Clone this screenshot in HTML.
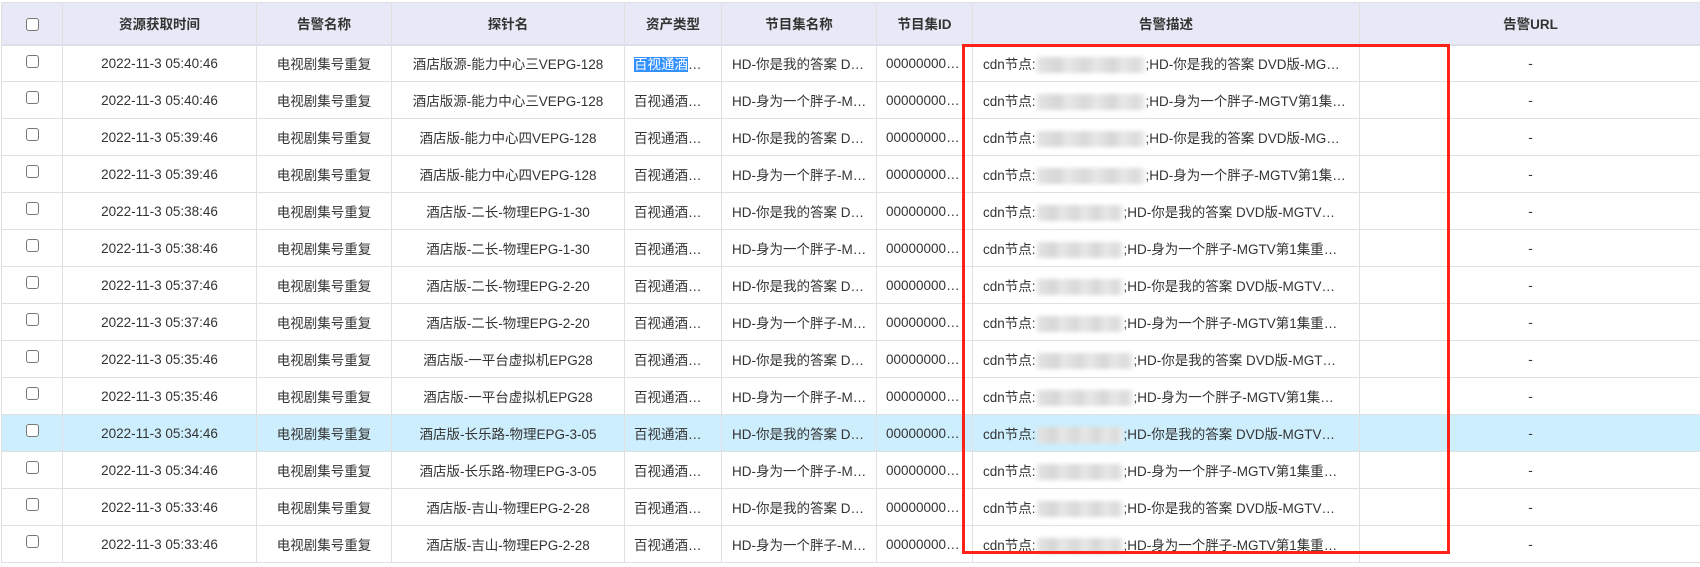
<!DOCTYPE html>
<html><head><meta charset="utf-8"><style>
*{box-sizing:border-box;margin:0;padding:0}
body{width:1700px;height:567px;background:#fff;font-family:"Liberation Sans","Noto Sans CJK SC",sans-serif;font-size:13.5px;color:#333;position:relative;overflow:hidden}
table{position:absolute;left:1px;top:2px;border-collapse:collapse;table-layout:fixed;width:1700px}
td,th{border:1px solid #e0e0e0;height:37px;white-space:nowrap;overflow:hidden;text-overflow:ellipsis;text-align:center;padding:0 6px}
th{height:42px;background:#e7eaf6;font-weight:bold;color:#333;border-bottom:2px solid #dcdfe8}
td.l{text-align:left;padding-left:9px;padding-right:4px}
td.d{text-align:left;padding-left:10px;padding-right:4px}
tr.hl td{background:#cdeefd}
.cb{display:inline-block;width:13px;height:13px;border:1px solid #777;border-radius:3px;background:#fff;vertical-align:middle;position:relative;top:-3px}
.bl{display:inline-block;width:108px;height:16px;vertical-align:middle;background:linear-gradient(90deg,#e4e4e4 0,#d6d6d6 20%,#e8e8e8 28%,#d8d8d8 45%,#e8e8e8 55%,#d6d6d6 70%,#e8e8e8 80%,#dadada 92%,#eee 100%);filter:blur(2px);margin:0 1px}
.sel{background:#3390ff;color:#fff}
#red{position:absolute;left:962px;top:44px;width:488px;height:510px;border:3px solid #ff2218}
</style></head><body>
<table>
<colgroup><col style="width:61px"><col style="width:194px"><col style="width:135px"><col style="width:233px"><col style="width:97px"><col style="width:155px"><col style="width:96px"><col style="width:387px"><col style="width:342px"></colgroup>
<tr><th><span class="cb" style="top:0"></span></th><th>资源获取时间</th><th>告警名称</th><th>探针名</th><th>资产类型</th><th>节目集名称</th><th>节目集ID</th><th>告警描述</th><th>告警URL</th></tr>
<tr><td><span class="cb"></span></td><td>2022-11-3 05:40:46</td><td>电视剧集号重复</td><td>酒店版源-能力中心三VEPG-128</td><td class="l"><span class="sel">百视通酒</span>…</td><td class="d">HD-你是我的答案 D…</td><td class="l">00000000…</td><td class="d">cdn节点:<span class="bl"></span>;HD-你是我的答案 DVD版-MG…</td><td>-</td></tr>
<tr><td><span class="cb"></span></td><td>2022-11-3 05:40:46</td><td>电视剧集号重复</td><td>酒店版源-能力中心三VEPG-128</td><td class="l">百视通酒…</td><td class="d">HD-身为一个胖子-M…</td><td class="l">00000000…</td><td class="d">cdn节点:<span class="bl"></span>;HD-身为一个胖子-MGTV第1集…</td><td>-</td></tr>
<tr><td><span class="cb"></span></td><td>2022-11-3 05:39:46</td><td>电视剧集号重复</td><td>酒店版-能力中心四VEPG-128</td><td class="l">百视通酒…</td><td class="d">HD-你是我的答案 D…</td><td class="l">00000000…</td><td class="d">cdn节点:<span class="bl"></span>;HD-你是我的答案 DVD版-MG…</td><td>-</td></tr>
<tr><td><span class="cb"></span></td><td>2022-11-3 05:39:46</td><td>电视剧集号重复</td><td>酒店版-能力中心四VEPG-128</td><td class="l">百视通酒…</td><td class="d">HD-身为一个胖子-M…</td><td class="l">00000000…</td><td class="d">cdn节点:<span class="bl"></span>;HD-身为一个胖子-MGTV第1集…</td><td>-</td></tr>
<tr><td><span class="cb"></span></td><td>2022-11-3 05:38:46</td><td>电视剧集号重复</td><td>酒店版-二长-物理EPG-1-30</td><td class="l">百视通酒…</td><td class="d">HD-你是我的答案 D…</td><td class="l">00000000…</td><td class="d">cdn节点:<span class="bl" style="width:86px"></span>;HD-你是我的答案 DVD版-MGTV…</td><td>-</td></tr>
<tr><td><span class="cb"></span></td><td>2022-11-3 05:38:46</td><td>电视剧集号重复</td><td>酒店版-二长-物理EPG-1-30</td><td class="l">百视通酒…</td><td class="d">HD-身为一个胖子-M…</td><td class="l">00000000…</td><td class="d">cdn节点:<span class="bl" style="width:86px"></span>;HD-身为一个胖子-MGTV第1集重…</td><td>-</td></tr>
<tr><td><span class="cb"></span></td><td>2022-11-3 05:37:46</td><td>电视剧集号重复</td><td>酒店版-二长-物理EPG-2-20</td><td class="l">百视通酒…</td><td class="d">HD-你是我的答案 D…</td><td class="l">00000000…</td><td class="d">cdn节点:<span class="bl" style="width:86px"></span>;HD-你是我的答案 DVD版-MGTV…</td><td>-</td></tr>
<tr><td><span class="cb"></span></td><td>2022-11-3 05:37:46</td><td>电视剧集号重复</td><td>酒店版-二长-物理EPG-2-20</td><td class="l">百视通酒…</td><td class="d">HD-身为一个胖子-M…</td><td class="l">00000000…</td><td class="d">cdn节点:<span class="bl" style="width:86px"></span>;HD-身为一个胖子-MGTV第1集重…</td><td>-</td></tr>
<tr><td><span class="cb"></span></td><td>2022-11-3 05:35:46</td><td>电视剧集号重复</td><td>酒店版-一平台虚拟机EPG28</td><td class="l">百视通酒…</td><td class="d">HD-你是我的答案 D…</td><td class="l">00000000…</td><td class="d">cdn节点:<span class="bl" style="width:96px"></span>;HD-你是我的答案 DVD版-MGT…</td><td>-</td></tr>
<tr><td><span class="cb"></span></td><td>2022-11-3 05:35:46</td><td>电视剧集号重复</td><td>酒店版-一平台虚拟机EPG28</td><td class="l">百视通酒…</td><td class="d">HD-身为一个胖子-M…</td><td class="l">00000000…</td><td class="d">cdn节点:<span class="bl" style="width:96px"></span>;HD-身为一个胖子-MGTV第1集…</td><td>-</td></tr>
<tr class="hl"><td><span class="cb"></span></td><td>2022-11-3 05:34:46</td><td>电视剧集号重复</td><td>酒店版-长乐路-物理EPG-3-05</td><td class="l">百视通酒…</td><td class="d">HD-你是我的答案 D…</td><td class="l">00000000…</td><td class="d">cdn节点:<span class="bl" style="width:86px"></span>;HD-你是我的答案 DVD版-MGTV…</td><td>-</td></tr>
<tr><td><span class="cb"></span></td><td>2022-11-3 05:34:46</td><td>电视剧集号重复</td><td>酒店版-长乐路-物理EPG-3-05</td><td class="l">百视通酒…</td><td class="d">HD-身为一个胖子-M…</td><td class="l">00000000…</td><td class="d">cdn节点:<span class="bl" style="width:86px"></span>;HD-身为一个胖子-MGTV第1集重…</td><td>-</td></tr>
<tr><td><span class="cb"></span></td><td>2022-11-3 05:33:46</td><td>电视剧集号重复</td><td>酒店版-吉山-物理EPG-2-28</td><td class="l">百视通酒…</td><td class="d">HD-你是我的答案 D…</td><td class="l">00000000…</td><td class="d">cdn节点:<span class="bl" style="width:86px"></span>;HD-你是我的答案 DVD版-MGTV…</td><td>-</td></tr>
<tr><td><span class="cb"></span></td><td>2022-11-3 05:33:46</td><td>电视剧集号重复</td><td>酒店版-吉山-物理EPG-2-28</td><td class="l">百视通酒…</td><td class="d">HD-身为一个胖子-M…</td><td class="l">00000000…</td><td class="d">cdn节点:<span class="bl" style="width:86px"></span>;HD-身为一个胖子-MGTV第1集重…</td><td>-</td></tr>
</table>
<div id="red"></div>
</body></html>
